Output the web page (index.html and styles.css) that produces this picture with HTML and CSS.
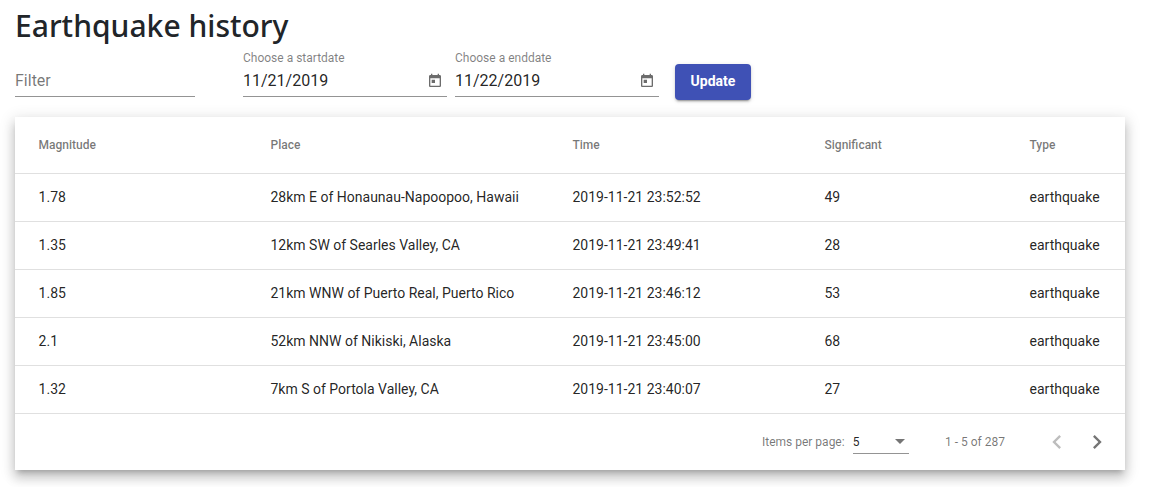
FILE: index.html
```html
<!DOCTYPE html>
<html lang="en">
<head>
<meta charset="utf-8">
<title>Earthquake history</title>
<link rel="stylesheet" href="styles.css">
</head>
<body>
<main class="page">
  <h2 class="title"><span class="title-text">Earthquake history</span></h2>
  <div class="toolbar">
    <div class="field field-filter"><span class="label"></span><span class="value placeholder">Filter</span></div>
    <div class="field field-date">
      <span class="label">Choose a startdate</span>
      <span class="value">11/21/2019</span>
      <svg class="calendar" viewBox="0 0 24 24"><path d="M19 3h-1V1h-2v2H8V1H6v2H5c-1.110 0-1.990.9-1.990 2L3 19c0 1.100.89 2 2 2h14c1.100 0 2-.9 2-2V5c0-1.100-.9-2-2-2zm0 16H5V8h14v11zM7 10h5v5H7z"/></svg>
    </div>
    <div class="field field-date">
      <span class="label">Choose a enddate</span>
      <span class="value">11/22/2019</span>
      <svg class="calendar" viewBox="0 0 24 24"><path d="M19 3h-1V1h-2v2H8V1H6v2H5c-1.110 0-1.990.9-1.990 2L3 19c0 1.100.89 2 2 2h14c1.100 0 2-.9 2-2V5c0-1.100-.9-2-2-2zm0 16H5V8h14v11zM7 10h5v5H7z"/></svg>
    </div>
    <button class="update">Update</button>
  </div>
  <section class="card">
    <table class="quakes">
      <colgroup><col class="c-mag"><col class="c-place"><col class="c-time"><col class="c-sig"><col></colgroup>
      <thead><tr><th>Magnitude</th><th>Place</th><th>Time</th><th>Significant</th><th>Type</th></tr></thead>
      <tbody>
        <tr><td>1.78</td><td>28km E of Honaunau-Napoopoo, Hawaii</td><td>2019-11-21 23:52:52</td><td>49</td><td>earthquake</td></tr>
        <tr><td>1.35</td><td>12km SW of Searles Valley, CA</td><td>2019-11-21 23:49:41</td><td>28</td><td>earthquake</td></tr>
        <tr><td>1.85</td><td>21km WNW of Puerto Real, Puerto Rico</td><td>2019-11-21 23:46:12</td><td>53</td><td>earthquake</td></tr>
        <tr><td>2.1</td><td>52km NNW of Nikiski, Alaska</td><td>2019-11-21 23:45:00</td><td>68</td><td>earthquake</td></tr>
        <tr><td>1.32</td><td>7km S of Portola Valley, CA</td><td>2019-11-21 23:40:07</td><td>27</td><td>earthquake</td></tr>
      </tbody>
    </table>
    <div class="paginator">
      <span class="per-page">Items per page:</span>
      <div class="select"><span>5</span><span class="arrow"></span></div>
      <span class="range">1 - 5 of 287</span>
      <svg class="nav nav-off" viewBox="0 0 24 24"><path d="M15.410 7.410L14 6l-6 6 6 6 1.410-1.410L10.830 12z"/></svg>
      <svg class="nav" viewBox="0 0 24 24"><path d="M10 6L8.590 7.410 13.170 12l-4.580 4.590L10 18l6-6z"/></svg>
    </div>
  </section>
</main>
</body>
</html>
```
FILE: styles.css
```css
* { box-sizing: border-box; }
body {
  margin: 0;
  background: #fff;
  color: rgba(0, 0, 0, .87);
  font-family: Roboto, "Liberation Sans", sans-serif;
}
.page { height: 487px; padding: 7px 28px 0 15px; }
.title {
  margin: 0;
  height: 38px;
  color: #212529;
  font: 500 31px/37px "Noto Sans", sans-serif;
  white-space: nowrap;
}
.title-text { display: inline-block; transform: scaleX(.969); transform-origin: left; }
.toolbar { display: flex; align-items: flex-start; height: 72px; padding-top: 5px; }
.field {
  display: grid;
  grid-template: 16px 31px / 1fr auto;
  height: 47px;
  border-bottom: 1px solid #949494;
}
.field-filter { width: 180px; margin-right: 48px; }
.field-date { width: 204px; margin-right: 8px; }
.label {
  grid-column: 1 / -1;
  font-size: 12px;
  line-height: 16px;
  color: rgba(0, 0, 0, .5);
  white-space: nowrap;
}
.value { font-size: 16px; line-height: 18px; padding-top: 6px; }
.placeholder { color: rgba(0, 0, 0, .54); }
.calendar { width: 16px; height: 16px; margin: 7px 4px 0 0; fill: #6c6c6c; }
.update {
  width: 76px;
  height: 36px;
  margin: 14px 0 0 8px;
  padding: 0 0 2px;
  border: 0;
  border-radius: 4px;
  background: #3f51b5;
  color: #fff;
  font: 700 14px/34px Roboto, sans-serif;
  box-shadow: 0 3px 1px -2px rgba(0, 0, 0, .2), 0 2px 2px rgba(0, 0, 0, .14), 0 1px 5px rgba(0, 0, 0, .12);
}
.card {
  width: 1110px;
  background: #fff;
  box-shadow: 0 5px 5px -3px rgba(0, 0, 0, .2), 0 8px 10px 1px rgba(0, 0, 0, .14), 0 3px 14px 2px rgba(0, 0, 0, .12);
}
.quakes { width: 100%; table-layout: fixed; border-collapse: separate; border-spacing: 0; }
.c-mag { width: 255.500px; }
.c-place { width: 302px; }
.c-time { width: 252px; }
.c-sig { width: 205px; }
th, td { padding: 0; text-align: left; white-space: nowrap; border-bottom: 1px solid #e0e0e0; }
th { height: 57px; font-size: 12px; font-weight: 500; color: rgba(0, 0, 0, .54); }
td { height: 48px; padding-bottom: 2px; font-size: 14px; }
th:first-child, td:first-child { padding-left: 23.600px; }
.paginator {
  display: flex;
  align-items: center;
  height: 56px;
  padding-right: 16px;
  font-size: 12px;
  color: rgba(0, 0, 0, .54);
}
.per-page { margin-left: auto; }
.select {
  display: flex;
  align-items: center;
  justify-content: space-between;
  width: 56px;
  height: 24px;
  margin: 0 36.400px 0 8px;
  padding-right: 4px;
  border-bottom: 1px solid #949494;
  color: rgba(0, 0, 0, .87);
}
.arrow { border: 5px solid transparent; border-top-color: #757575; border-bottom: 0; }
.range { margin-right: 38px; }
.nav { width: 28px; height: 28px; margin-right: 12px; fill: #757575; }
.nav:last-child { margin-right: -2px; }
.nav-off { fill: #bdbdbd; }
```
